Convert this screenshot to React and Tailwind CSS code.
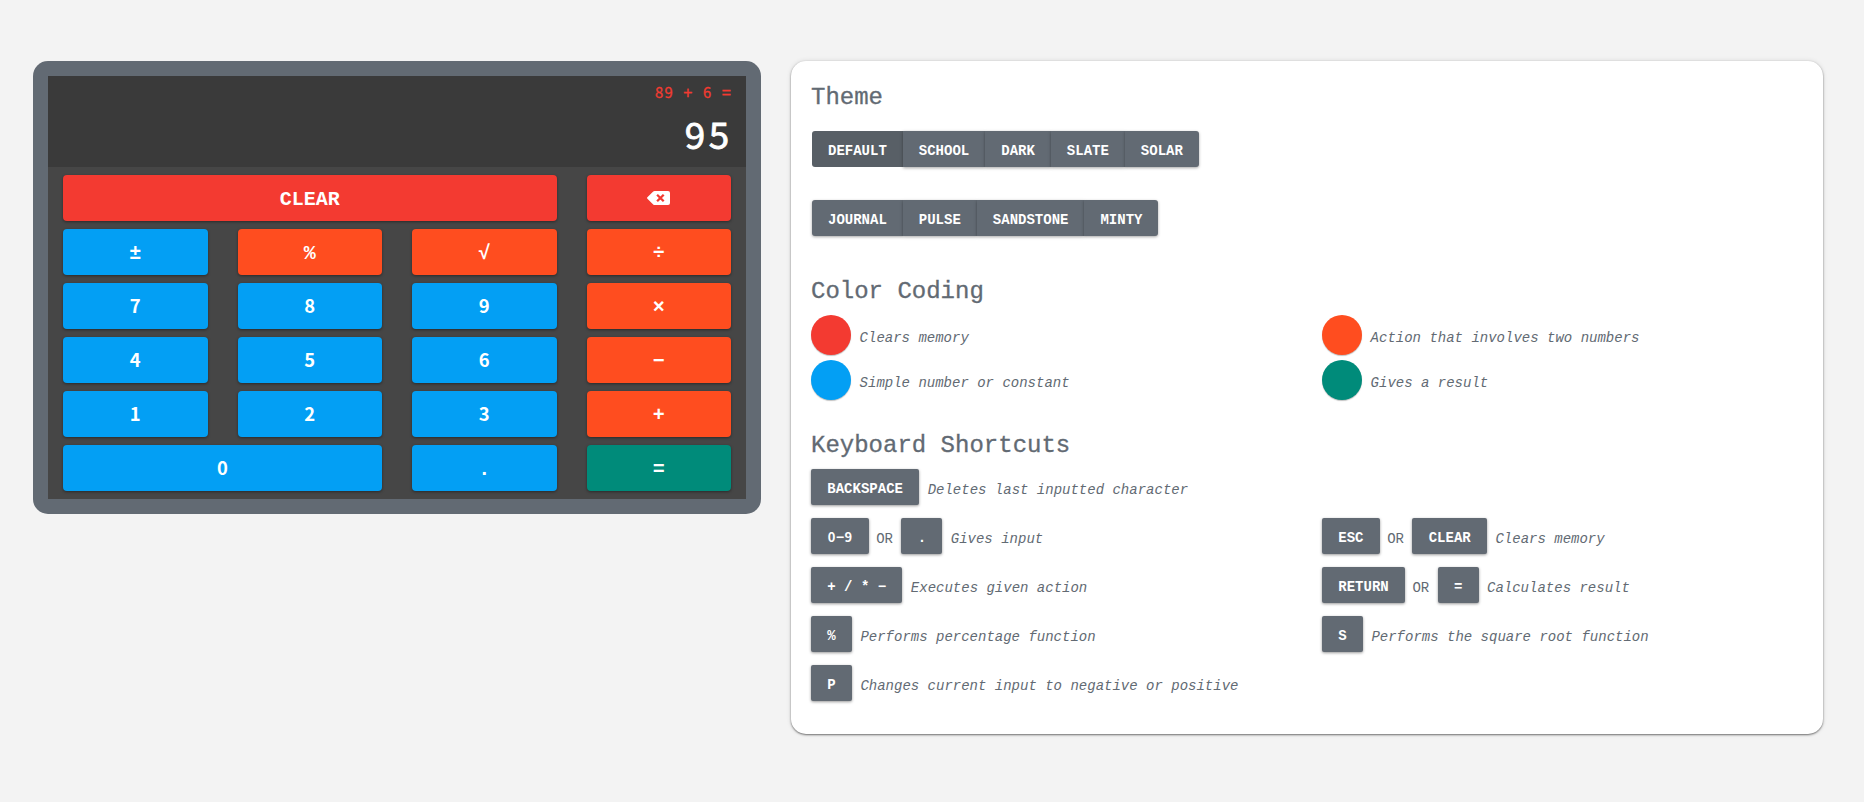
import React from "react";

const tones = {
  red: "bg-[#f33a31]",
  orange: "bg-[#ff4d1f]",
  blue: "bg-[#039ff4]",
  green: "bg-[#008b7a]",
};

const keys = [
  { label: "CLEAR", tone: "red", span: "col-span-3" },
  { label: <Backspace />, tone: "red" },
  { label: "±", tone: "blue" },
  { label: "%", tone: "orange" },
  { label: "√", tone: "orange" },
  { label: "÷", tone: "orange" },
  { label: "7", tone: "blue" },
  { label: "8", tone: "blue" },
  { label: "9", tone: "blue" },
  { label: "×", tone: "orange" },
  { label: "4", tone: "blue" },
  { label: "5", tone: "blue" },
  { label: "6", tone: "blue" },
  { label: "−", tone: "orange" },
  { label: "1", tone: "blue" },
  { label: "2", tone: "blue" },
  { label: "3", tone: "blue" },
  { label: "+", tone: "orange" },
  { label: "0", tone: "blue", span: "col-span-2" },
  { label: ".", tone: "blue" },
  { label: "=", tone: "green" },
];

function Backspace() {
  return (
    <svg viewBox="0 0 23 14" className="mb-px h-[14px] w-[23px]">
      <path
        d="M6.2.6A2 2 0 0 1 7.6 0H21a2 2 0 0 1 2 2v10a2 2 0 0 1-2 2H7.6a2 2 0 0 1-1.4-.6L.4 7.7a1 1 0 0 1 0-1.4Z"
        fill="#fff"
      />
      <path d="m10.1 3.7 6.6 6.6m0-6.6-6.6 6.6" stroke="#f33a31" strokeWidth="2.3" />
    </svg>
  );
}

// Sets each digit in the width of one monospace cell; other characters stay as they are.
function Cells({ children }) {
  return children.split("").map((c, i) =>
    /\d/.test(c) ? (
      <span key={i} className="inline-flex w-[0.6em] justify-center">
        <span className="font-['Noto_Sans_CJK_JP',sans-serif] text-[0.92em] leading-none">{c}</span>
      </span>
    ) : (
      c
    )
  );
}

function Calculator() {
  return (
    <section className="h-[453px] w-[728px] shrink-0 overflow-hidden rounded-[15px] bg-[#626a73] p-[15px]">
      <div className="h-full bg-[#464646]">
        <div className="flex h-[91px] flex-col items-end bg-[#3a3a3a] px-[15px] pt-1.5 text-right">
          <div className="h-6 text-base leading-6 whitespace-pre text-[#f33a31] [-webkit-text-stroke:0.3px_#f33a31]">
            <Cells>89 + 6 =</Cells>
          </div>
          <div className="h-[60px] pt-[3px] text-[40px] leading-[60px] text-white [-webkit-text-stroke:0.8px_#fff]">
            <Cells>95</Cells>
          </div>
        </div>
        <div className="grid grid-cols-4 gap-x-[30px] gap-y-2 px-[15px] py-2">
          {keys.map((k, i) => (
            <button
              key={i}
              className={`flex h-[46px] items-center justify-center rounded text-xl font-bold text-white shadow-[0_1px_3px_rgba(0,0,0,0.4)] ${tones[k.tone]} ${k.span || ""}`}
            >
              {typeof k.label === "string" ? (
                <span className="pt-[3px] leading-6">
                  <Cells>{k.label}</Cells>
                </span>
              ) : (
                k.label
              )}
            </button>
          ))}
        </div>
      </div>
    </section>
  );
}

function ThemeGroup({ names, active }) {
  return (
    <div className="ml-px flex">
      {names.map((n) => (
        <button
          key={n}
          className={`h-9 px-4 pt-[3px] text-sm font-bold text-white first:rounded-l-[3px] last:rounded-r-[3px] ${
            n === active ? "bg-[#585f66]" : "bg-[#626a73] shadow-[0_1px_3px_rgba(0,0,0,0.35)]"
          }`}
        >
          {n}
        </button>
      ))}
    </div>
  );
}

function Heading({ children }) {
  return <h2 className="text-2xl leading-7 font-normal text-[#626a73] [-webkit-text-stroke:0.3px_#626a73]">{children}</h2>;
}

function Swatch({ tone, children }) {
  return (
    <div className="flex h-[45px] gap-[8.6px]">
      <span className={`size-10 rounded-full shadow-[0_1px_1px_rgba(0,0,0,0.25)] ${tones[tone]}`} />
      <em className="pt-[3px] text-sm leading-10">{children}</em>
    </div>
  );
}

function Key({ children }) {
  return (
    <kbd className="flex h-9 items-center rounded-[2px] bg-[#626a73] px-[16.3px] font-[inherit] text-sm font-bold text-white shadow-[0_1px_3px_rgba(0,0,0,0.4)]">
      <span className="pt-1 leading-5 whitespace-pre">
        <Cells>{children}</Cells>
      </span>
    </kbd>
  );
}

function Shortcut({ keys: names, children }) {
  return (
    <div className="flex h-[49px] items-start gap-[8.4px] text-sm leading-9">
      {names.map((n, i) => (
        <React.Fragment key={i}>
          {i > 0 && <span className="-ml-px pt-[3px]">OR</span>}
          <Key>{n}</Key>
        </React.Fragment>
      ))}
      <em className="pt-[3px]">{children}</em>
    </div>
  );
}

export default function App() {
  return (
    <main className="flex h-[802px] w-full items-start gap-[30px] bg-[#f3f3f3] pt-[61px] pl-[33px] font-['Liberation_Mono',monospace]">
      <Calculator />
      <section className="flex h-[673px] w-[1032px] flex-col rounded-[15px] bg-white pt-[23px] pl-5 text-[#626a73] shadow-[0_1px_2px_rgba(0,0,0,0.5),0_0_5px_rgba(0,0,0,0.12)]">
        <Heading>Theme</Heading>
        <div className="mt-[19px] flex flex-col gap-[33px]">
          <ThemeGroup names={["DEFAULT", "SCHOOL", "DARK", "SLATE", "SOLAR"]} active="DEFAULT" />
          <ThemeGroup names={["JOURNAL", "PULSE", "SANDSTONE", "MINTY"]} />
        </div>
        <div className="mt-[42px]">
          <Heading>Color Coding</Heading>
        </div>
        <div className="mt-[9px] grid w-[1022px] grid-cols-2">
          <Swatch tone="red">Clears memory</Swatch>
          <Swatch tone="orange">Action that involves two numbers</Swatch>
          <Swatch tone="blue">Simple number or constant</Swatch>
          <Swatch tone="green">Gives a result</Swatch>
        </div>
        <div className="mt-[27px]">
          <Heading>Keyboard Shortcuts</Heading>
        </div>
        <div className="mt-[9px] grid w-[1022px] grid-cols-2">
          <div className="col-span-2">
            <Shortcut keys={["BACKSPACE"]}>Deletes last inputted character</Shortcut>
          </div>
          <Shortcut keys={["0−9", "."]}>Gives input</Shortcut>
          <Shortcut keys={["ESC", "CLEAR"]}>Clears memory</Shortcut>
          <Shortcut keys={["+ / * −"]}>Executes given action</Shortcut>
          <Shortcut keys={["RETURN", "="]}>Calculates result</Shortcut>
          <Shortcut keys={["%"]}>Performs percentage function</Shortcut>
          <Shortcut keys={["S"]}>Performs the square root function</Shortcut>
          <Shortcut keys={["P"]}>Changes current input to negative or positive</Shortcut>
        </div>
      </section>
    </main>
  );
}
